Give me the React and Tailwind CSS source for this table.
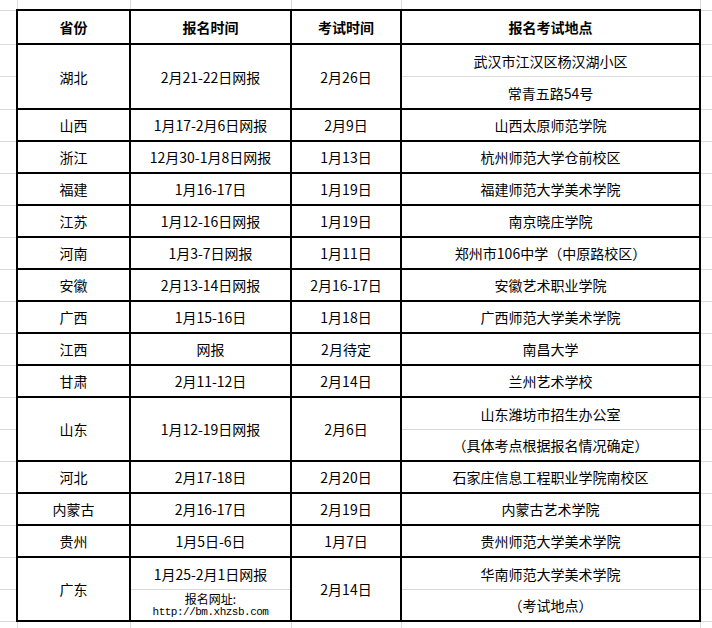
import React from 'react';

// spreadsheet gridline spacing beside the table (y = 10, 44, 76, 109 ... 621)
const lineRows = ['h-[34px]', 'h-8', 'h-[33px]', ...Array(16).fill('h-8'), 'h-px'];

const rows = [
  { province: '湖北', signup: '2月21-22日网报', exam: '2月26日', place: ['武汉市江汉区杨汉湖小区', '常青五路54号'], tall: 'h-[63px]' },
  { province: '山西', signup: '1月17-2月6日网报', exam: '2月9日', place: '山西太原师范学院' },
  { province: '浙江', signup: '12月30-1月8日网报', exam: '1月13日', place: '杭州师范大学仓前校区' },
  { province: '福建', signup: '1月16-17日', exam: '1月19日', place: '福建师范大学美术学院' },
  { province: '江苏', signup: '1月12-16日网报', exam: '1月19日', place: '南京晓庄学院' },
  { province: '河南', signup: '1月3-7日网报', exam: '1月11日', place: '郑州市106中学（中原路校区）' },
  { province: '安徽', signup: '2月13-14日网报', exam: '2月16-17日', place: '安徽艺术职业学院' },
  { province: '广西', signup: '1月15-16日', exam: '1月18日', place: '广西师范大学美术学院' },
  { province: '江西', signup: '网报', exam: '2月待定', place: '南昌大学' },
  { province: '甘肃', signup: '2月11-12日', exam: '2月14日', place: '兰州艺术学校' },
  { province: '山东', signup: '1月12-19日网报', exam: '2月6日', place: ['山东潍坊市招生办公室', '（具体考点根据报名情况确定）'], tall: 'h-[62px]' },
  { province: '河北', signup: '2月17-18日', exam: '2月20日', place: '石家庄信息工程职业学院南校区' },
  { province: '内蒙古', signup: '2月16-17日', exam: '2月19日', place: '内蒙古艺术学院' },
  { province: '贵州', signup: '1月5日-6日', exam: '1月7日', place: '贵州师范大学美术学院' },
  {
    province: '广东',
    signup: [
      '1月25-2月1日网报',
      <div key="url" className="flex flex-col items-center">
        <span className="text-[12px] leading-[14px]">报名网址:</span>
        <span className="text-[11px] leading-[13px] tracking-[-0.5px] font-['Liberation_Mono',monospace]">http://bm.xhzsb.com</span>
      </div>,
    ],
    exam: '2月14日',
    place: ['华南师范大学美术学院', '（考试地点）'],
    tall: 'h-[62px]',
  },
];

function GridStrip({ className }) {
  return (
    <div className={`flex flex-col ${className}`}>
      <div className="h-px" />
      {lineRows.map((h, i) => (
        <div key={i} className={`${h} border-t border-[#d9d9d9]`} />
      ))}
    </div>
  );
}

function ColumnLines({ className }) {
  return (
    <div className={`flex ${className}`}>
      <div className="w-[17px]" />
      <div className="w-[113px] border-l border-[#d9d9d9]" />
      <div className="w-[161px] border-l border-[#d9d9d9]" />
      <div className="w-[110px] border-l border-[#d9d9d9]" />
      <div className="w-[299px] border-l border-[#d9d9d9]" />
      <div className="flex-1 border-l border-[#d9d9d9]" />
    </div>
  );
}

function Cell({ value }) {
  // two stacked sheet rows inside one bordered cell
  if (Array.isArray(value)) {
    return (
      <div className="bg-white flex flex-col">
        <div className="h-8 flex items-center justify-center border-b border-[#d9d9d9]">{value[0]}</div>
        <div className="flex-1 flex items-center justify-center">{value[1]}</div>
      </div>
    );
  }
  return <div className="bg-white flex items-center justify-center">{value}</div>;
}

export default function App() {
  return (
    <div className="w-[712px] h-[628px] overflow-hidden bg-white flex flex-col text-black text-[14px] leading-none font-['Noto_Sans_CJK_SC',sans-serif]">
      <ColumnLines className="h-[9px]" />

      <div className="flex h-[613px]">
        <GridStrip className="w-[16px]" />

        {/* Table */}
        <div className="w-[685px] bg-black p-[2px] flex flex-col gap-[2px]">
          <div className="h-8 grid grid-cols-[111px_159px_108px_297px] gap-[2px] font-bold">
            <Cell value="省份" />
            <Cell value="报名时间" />
            <Cell value="考试时间" />
            <Cell value="报名考试地点" />
          </div>
          {rows.map((row) => (
            <div
              key={row.province}
              className={`${row.tall || 'h-[30px]'} grid grid-cols-[111px_159px_108px_297px] gap-[2px]`}
            >
              <Cell value={row.province} />
              <Cell value={row.signup} />
              <Cell value={row.exam} />
              <Cell value={row.place} />
            </div>
          ))}
        </div>

        <GridStrip className="flex-1" />
      </div>

      <ColumnLines className="flex-1" />
    </div>
  );
}
